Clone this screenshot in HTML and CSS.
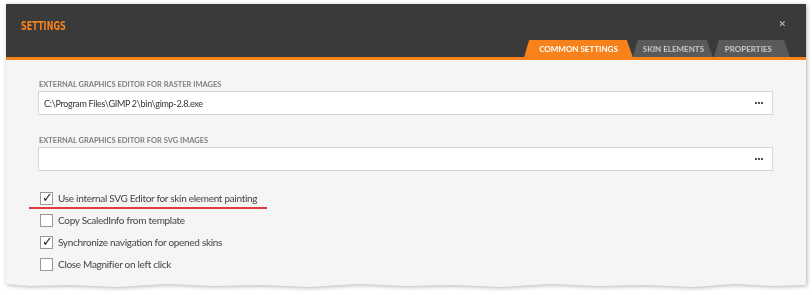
FILE: index.html
```html
<!DOCTYPE html>
<html lang="en">
<head>
  <meta charset="UTF-8" />
  <title>Settings</title>
  <link rel="stylesheet" href="styles.css">
</head>
<body>
  <div class="window">
    <div class="header">
      <div class="title">SETTINGS</div>
      <span class="close">&#10005;</span>
      <div class="tabs">
        <div class="tab active">COMMON SETTINGS</div>
        <div class="tab skin">SKIN ELEMENTS</div>
        <div class="tab props">PROPERTIES</div>
      </div>
    </div>
    <div class="content">
      <!-- editor paths -->
      <div class="field">
        <label>EXTERNAL GRAPHICS EDITOR FOR RASTER IMAGES</label>
        <div class="box"><span>C:\Program Files\GIMP 2\bin\gimp-2.8.exe</span><span class="dots"><i></i><i></i><i></i></span></div>
      </div>
      <div class="field">
        <label>EXTERNAL GRAPHICS EDITOR FOR SVG IMAGES</label>
        <div class="box"><span></span><span class="dots"><i></i><i></i><i></i></span></div>
      </div>

      <!-- options -->
      <div class="checks">
        <div class="check marked"><span class="cb">&#10003;</span>Use internal SVG Editor for skin element painting</div>
        <div class="check"><span class="cb"></span>Copy ScaledInfo from template</div>
        <div class="check"><span class="cb">&#10003;</span>Synchronize navigation for opened skins</div>
        <div class="check"><span class="cb"></span>Close Magnifier on left click</div>
      </div>
    </div>
  </div>
</body>
</html>
```

FILE: styles.css
```css
body { margin: 0; background: #fff; font-family: Lato, "Open Sans", sans-serif; }
.window { margin: 4px 0 0 6px; width: 800px; filter: drop-shadow(1px 1px 2px rgba(0,0,0,0.3)); }
.header {
  position: relative; height: 53px; background: #3a3a3a; border-bottom: 3px solid #f7821b;
}
.title {
  padding: 14px 0 0 15px; color: #f7821b; font-family: "DejaVu Sans Condensed", "DejaVu Sans", sans-serif;
  font-weight: bold; font-size: 12.5px; transform: scaleX(0.72); transform-origin: 15px 0;
}
.close { position: absolute; right: 20px; top: 15px; color: #c8c8c8; font-size: 9px; font-family: "DejaVu Sans", sans-serif; }
.tabs { position: absolute; right: 16px; bottom: 0; display: flex; }
.tab {
  height: 17px; line-height: 18px; padding: 0 11px 0 10px;
  background: #5a5a5a; color: #c8c8c8; font-size: 8px; font-weight: bold; white-space: nowrap;
  clip-path: polygon(5px 0, calc(100% - 6px) 0, 100% 100%, 0 100%);
  border-radius: 3px 3px 0 0;
}
.tab.active { background: #f7821b; color: #fff; padding: 0 15px; }
.tab.skin { width: 59px; text-align: center; }
.tab.props { margin-left: 1px; padding: 0 18px 0 11px; }
.content {
  background: #f5f5f5; height: 225px; padding: 20px 33px 0 32px;
  clip-path: polygon(0 0, 100% 0, 100% 225px, 96% 226px, 91% 224px, 86% 227px, 80% 225px, 74% 226px, 68% 224px, 62% 227px, 56% 225px, 50% 226px, 44% 224px, 38% 227px, 32% 225px, 26% 226px, 20% 224px, 14% 227px, 8% 225px, 3% 226px, 0 224px);
}
.field { margin-bottom: 21px; }
.field label { display: block; font-size: 7.5px; line-height: 10px; font-weight: bold; color: #808080; margin: 0 0 1px 1px; }
.box {
  height: 22px; background: #fff; border: 1px solid #d6d6d6; display: flex; align-items: center;
  justify-content: space-between; padding: 0 9px 0 5px; font-size: 9px; letter-spacing: -0.3px; color: #333;
}
.dots { display: flex; gap: 1px; }
.dots i { width: 2px; height: 2px; background: #555; }
.checks { margin-top: -3px; }
.check {
  display: flex; align-items: center; height: 22px; font-size: 10px; letter-spacing: -0.3px;
  color: #444; margin-left: 2px; white-space: nowrap;
}
.check.marked {
  border-bottom: 2px solid #e23b3e; margin-left: -9px; padding-left: 11px; width: 238px;
  box-sizing: border-box; height: 20px;
}
.cb {
  display: block; width: 11px; height: 11px; border: 1px solid #999; background: #fff; margin-right: 5px;
  font-size: 13px; font-weight: bold; line-height: 9px; color: #222; text-indent: 1px; letter-spacing: 0;
  font-family: "DejaVu Sans", sans-serif;
}
```
